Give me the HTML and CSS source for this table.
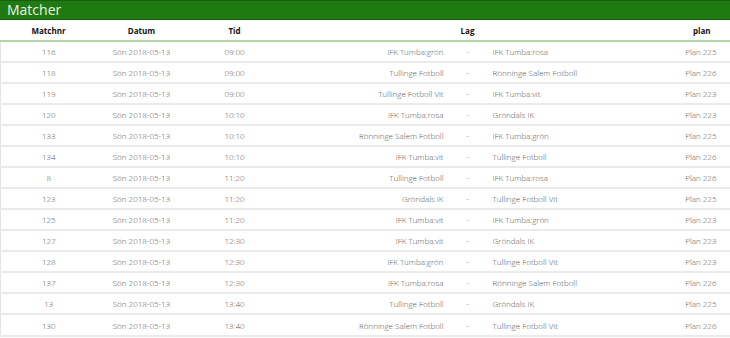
FILE: index.html
```html
<!DOCTYPE html>
<html>
<head>
<meta charset="utf-8">
<link rel="stylesheet" href="styles.css">
</head>
<body>
<div class="panel">
  <div class="title">Matcher</div>
  <table class="matches">
    <colgroup>
      <col class="c-nr"><col class="c-date"><col class="c-time"><col class="c-home"><col class="c-dash"><col class="c-away"><col class="c-plan">
    </colgroup>
    <thead>
      <tr>
        <th>Matchnr</th><th>Datum</th><th>Tid</th><th colspan="3">Lag</th><th class="h-plan">plan</th>
      </tr>
    </thead>
    <tbody>
      <tr><td>116</td><td>Sön 2018-05-13</td><td>09:00</td><td class="home">IFK Tumba:grön</td><td>-</td><td class="away">IFK Tumba:rosa</td><td class="plan">Plan 225</td></tr>
      <tr><td>118</td><td>Sön 2018-05-13</td><td>09:00</td><td class="home">Tullinge Fotboll</td><td>-</td><td class="away">Rönninge Salem Fotboll</td><td class="plan">Plan 226</td></tr>
      <tr><td>119</td><td>Sön 2018-05-13</td><td>09:00</td><td class="home">Tullinge Fotboll Vit</td><td>-</td><td class="away">IFK Tumba:vit</td><td class="plan">Plan 223</td></tr>
      <tr><td>120</td><td>Sön 2018-05-13</td><td>10:10</td><td class="home">IFK Tumba:rosa</td><td>-</td><td class="away">Gröndals IK</td><td class="plan">Plan 223</td></tr>
      <tr><td>133</td><td>Sön 2018-05-13</td><td>10:10</td><td class="home">Rönninge Salem Fotboll</td><td>-</td><td class="away">IFK Tumba:grön</td><td class="plan">Plan 225</td></tr>
      <tr><td>134</td><td>Sön 2018-05-13</td><td>10:10</td><td class="home">IFK Tumba:vit</td><td>-</td><td class="away">Tullinge Fotboll</td><td class="plan">Plan 226</td></tr>
      <tr><td>8</td><td>Sön 2018-05-13</td><td>11:20</td><td class="home">Tullinge Fotboll</td><td>-</td><td class="away">IFK Tumba:rosa</td><td class="plan">Plan 226</td></tr>
      <tr><td>123</td><td>Sön 2018-05-13</td><td>11:20</td><td class="home">Gröndals IK</td><td>-</td><td class="away">Tullinge Fotboll Vit</td><td class="plan">Plan 225</td></tr>
      <tr><td>125</td><td>Sön 2018-05-13</td><td>11:20</td><td class="home">IFK Tumba:vit</td><td>-</td><td class="away">IFK Tumba:grön</td><td class="plan">Plan 223</td></tr>
      <tr><td>127</td><td>Sön 2018-05-13</td><td>12:30</td><td class="home">IFK Tumba:vit</td><td>-</td><td class="away">Gröndals IK</td><td class="plan">Plan 223</td></tr>
      <tr><td>128</td><td>Sön 2018-05-13</td><td>12:30</td><td class="home">IFK Tumba:grön</td><td>-</td><td class="away">Tullinge Fotboll Vit</td><td class="plan">Plan 223</td></tr>
      <tr><td>137</td><td>Sön 2018-05-13</td><td>12:30</td><td class="home">IFK Tumba:rosa</td><td>-</td><td class="away">Rönninge Salem Fotboll</td><td class="plan">Plan 226</td></tr>
      <tr><td>13</td><td>Sön 2018-05-13</td><td>13:40</td><td class="home">Tullinge Fotboll</td><td>-</td><td class="away">Gröndals IK</td><td class="plan">Plan 225</td></tr>
      <tr><td>130</td><td>Sön 2018-05-13</td><td>13:40</td><td class="home">Rönninge Salem Fotboll</td><td>-</td><td class="away">Tullinge Fotboll Vit</td><td class="plan">Plan 226</td></tr>
    </tbody>
  </table>
</div>
</body>
</html>
```
FILE: styles.css
```css
html, body {
  margin: 0;
  padding: 0;
  background: #ffffff;
}
body {
  font-family: "Open Sans", "DejaVu Sans", sans-serif;
}
.panel {
  width: 730px;
}
.title {
  height: 18px;
  background: #1f7a12;
  border-top: 1px solid #14600c;
  border-bottom: 1px solid #14600c;
  color: #eaf5e4;
  font-size: 14px;
  line-height: 18px;
  padding-left: 7px;
}
.matches {
  width: 730px;
  border-collapse: collapse;
  table-layout: fixed;
}
.c-nr { width: 96px; }
.c-date { width: 90px; }
.c-time { width: 96px; }
.c-home { width: 168px; }
.c-dash { width: 34px; }
.c-away { width: 168px; }
.c-plan { width: 78px; }
.matches th {
  height: 20px;
  padding: 0;
  font-size: 8px;
  font-weight: 700;
  color: #111;
  text-align: center;
  border-bottom: 2px solid #b5d6a8;
}
.matches th.h-plan {
  text-align: right;
  padding-right: 20px;
}
.matches td {
  height: 19px;
  padding: 0;
  font-size: 8px;
  font-weight: 300;
  color: #555;
  text-align: center;
  border-bottom: 2px solid #ebebeb;
}
.matches tbody tr:last-child td {
  height: 20px;
}
.matches tbody tr td:first-child {
  border-left: 1px solid #e4e4e4;
}
.matches td.home {
  text-align: right;
  padding-right: 7px;
}
.matches td.away {
  text-align: left;
  padding-left: 8px;
}
.matches td.plan {
  text-align: right;
  padding-right: 14px;
}
```
